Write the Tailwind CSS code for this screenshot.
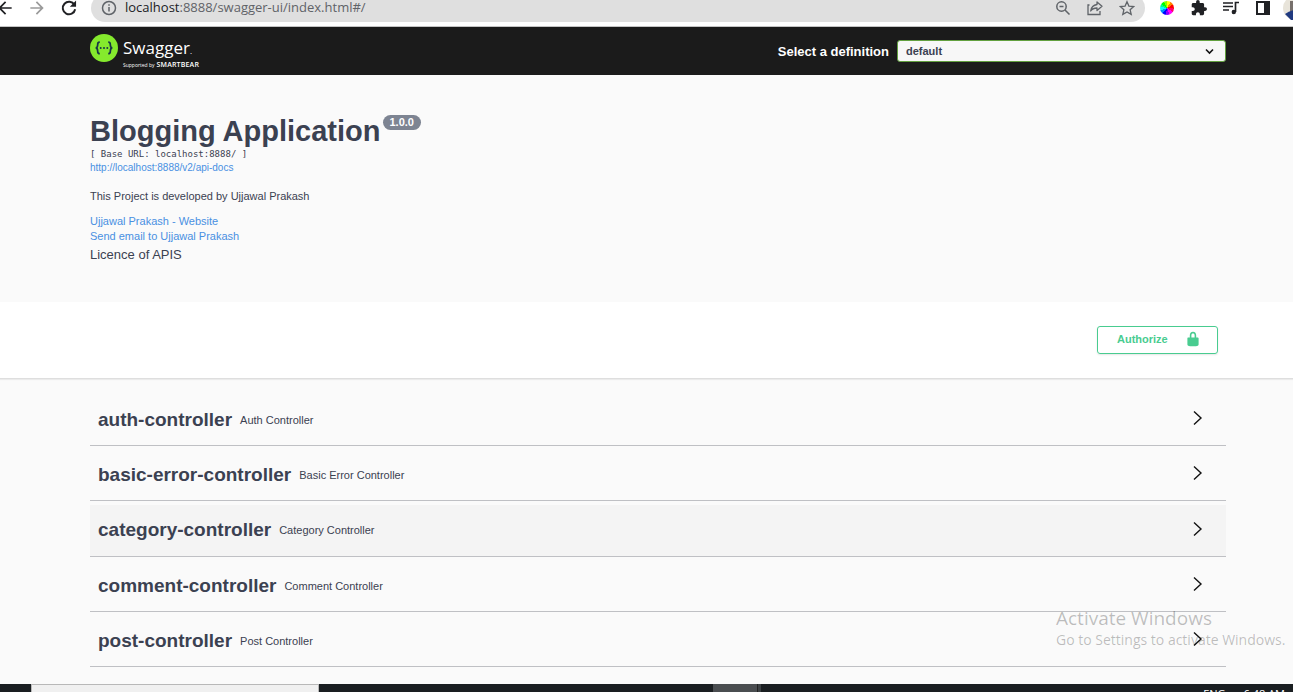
<!DOCTYPE html>
<html lang="en">
<head>
<meta charset="utf-8">
<title>Swagger UI</title>
<script src="https://cdn.jsdelivr.net/npm/@tailwindcss/browser@4"></script>
</head>
<body class="flex h-screen flex-col overflow-hidden bg-[#fafafa] font-['Liberation_Sans',Arial,sans-serif] text-[#3b4151]">

<div class="flex h-[27px] shrink-0 items-end overflow-hidden border-b border-[#c4c4c4] bg-white pb-1">
  <div class="flex h-7 w-[91px] shrink-0 items-center text-[#202124]">
    <button aria-label="Back" class="-ml-[5px] w-5"><svg class="size-5" viewBox="0 0 24 24" fill="currentColor"><path d="M20 11H7.83l5.59-5.59L12 4l-8 8 8 8 1.41-1.41L7.83 13H20z"/></svg></button>
    <button aria-label="Forward" class="ml-3 w-5 text-[#9a9a9a]"><svg class="size-5" viewBox="0 0 24 24" fill="currentColor"><path d="M4 11h12.17l-5.59-5.59L12 4l8 8-8 8-1.41-1.41L16.17 13H4z"/></svg></button>
    <button aria-label="Reload" class="ml-3 w-5"><svg class="size-5" viewBox="0 0 24 24" fill="none" stroke="currentColor" stroke-width="2.4"><path d="M18.500 8.200A7.500 7.500 0 1 0 19.400 13.500"/><path d="M20.500 3v7.500H13z" fill="currentColor" stroke="none"/></svg></button>
  </div>
  <div class="flex h-7 flex-1 items-center rounded-full bg-[#dfdfdf] pl-[10px] pr-[10px] text-[#5f6368]">
    <svg class="size-4" viewBox="0 0 16 16" fill="none" stroke="currentColor" stroke-width="1.500"><circle cx="8" cy="8" r="6.500"/><path d="M8 7v4.500M8 4.200v1.600"/></svg>
    <span class="ml-2 flex-1 whitespace-nowrap font-['Open_Sans',sans-serif] text-[13px]"><span class="text-[#202124]">localhost</span>:8888/swagger-ui/index.html#/</span>
    <div class="flex items-center gap-4">
      <button aria-label="Zoom"><svg class="block size-4" viewBox="0 0 16 16" fill="none" stroke="currentColor" stroke-width="1.500"><circle cx="6.500" cy="6.500" r="4.700"/><path d="M10 10l4.500 4.500M4.500 6.500h4"/></svg></button>
      <button aria-label="Share"><svg class="block size-4" viewBox="0 0 16 16" fill="none" stroke="currentColor" stroke-width="1.300"><path d="M2.500 5H1v9.500h12V11"/><path d="M10 2l5 4.300-5 4.200V8C7 8 5 9 3.700 11 4.200 7.500 6.500 5 10 4.500z" stroke-linejoin="round"/></svg></button>
      <button aria-label="Bookmark"><svg class="block size-4" viewBox="0 0 16 16" fill="none" stroke="currentColor" stroke-width="1.300"><path d="M8 1.700l1.900 4.400 4.800.4-3.600 3.200 1.100 4.700L8 11.900l-4.200 2.500 1.100-4.700L1.300 6.500l4.800-.4z"/></svg></button>
    </div>
  </div>
  <div class="flex h-7 w-[148px] shrink-0 items-center gap-4 overflow-hidden pl-[14px] text-[#202124]">
    <span class="mx-px size-[14px] shrink-0 rounded-full bg-[conic-gradient(#ff0_0_30deg,#ff8000_30deg_60deg,#f00_60deg_95deg,#f06_95deg_125deg,#f0f_125deg_160deg,#80f_160deg_190deg,#00f_190deg_220deg,#08f_220deg_250deg,#0ff_250deg_280deg,#0f8_280deg_305deg,#0f0_305deg_335deg,#8f0_335deg)]"></span>
    <svg class="size-4 shrink-0" viewBox="1 1 22 22" fill="currentColor"><path d="M20.500 11H19V7c0-1.100-.9-2-2-2h-4V3.500a2.500 2.500 0 0 0-5 0V5H4c-1.100 0-1.990.9-1.990 2v3.800H3.500c1.490 0 2.700 1.210 2.700 2.700s-1.210 2.700-2.700 2.700H2V20c0 1.100.9 2 2 2h3.800v-1.500c0-1.490 1.210-2.700 2.700-2.700s2.700 1.210 2.700 2.700V22H17c1.100 0 2-.9 2-2v-4h1.500a2.500 2.500 0 0 0 0-5z"/></svg>
    <svg class="size-4 shrink-0" viewBox="0 0 16 16" fill="none" stroke="currentColor" stroke-width="1.700"><path d="M0 3h10M0 6.500h10M0 10h6M12.500 12V2.500H16"/><circle cx="10.800" cy="12" r="2.200" fill="currentColor" stroke="none"/></svg>
    <svg class="size-4 shrink-0" viewBox="0 0 16 16"><path d="M1 1h14v14H1zM3 3v10h6V3z" fill="currentColor" fill-rule="evenodd"/></svg>
    <svg class="-ml-1 size-6 shrink-0" viewBox="0 0 24 24"><circle cx="12" cy="12" r="12" fill="#e8e4da"/><path d="M7 5h12v11H7z" fill="#77706c"/><path d="M2 18q6-5 14-4v10H8z" fill="#203a80"/></svg>
  </div>
</div>

<header class="flex h-12 shrink-0 items-center justify-between bg-[#1b1b1b] pl-[90px] pr-[67px]">
  <a href="#" aria-label="Swagger, supported by SmartBear" class="flex items-start pt-1 text-white">
    <svg class="-mt-1 size-7" viewBox="0 0 28 28" fill="none" stroke="#173647" stroke-width="1.700"><circle cx="14" cy="14" r="14" fill="#85ea2d" stroke="none"/><path d="M9.800 8.200C7.800 8.200 7.700 9 7.700 10.500 7.700 13 7.400 13.900 5.600 13.900 7.400 13.900 7.700 15 7.700 17.400 7.700 19 7.800 19.700 9.800 19.700M18.200 8.200C20.200 8.200 20.300 9 20.300 10.500 20.300 13 20.600 13.900 22.400 13.900 20.600 13.900 20.300 15 20.300 17.400 20.300 19 20.200 19.700 18.200 19.700"/><g fill="#173647" stroke="none"><circle cx="10.700" cy="14" r="1"/><circle cx="14" cy="14" r="1"/><circle cx="17.300" cy="14" r="1"/></g></svg>
    <span class="ml-[5px] flex flex-col font-['Open_Sans',sans-serif]">
      <span class="text-[17px] leading-5">Swagger<span class="text-[8px]">.</span></span>
      <span class="flex items-baseline gap-[2px] text-[5px] leading-2"><span>Supported by</span><b class="text-[7px] font-semibold tracking-wide">SMARTBEAR</b></span>
    </span>
  </a>
  <div class="flex items-center">
    <label for="definition" class="pt-px text-[13px] font-bold text-white">Select a definition</label>
    <div class="relative ml-2">
      <select id="definition" class="block h-[22px] w-[329px] appearance-none rounded-[3px] border border-[#62a03f] bg-[#f7f7f7] pl-2 text-[11px] font-bold text-[#3b4151]"><option>default</option></select>
      <svg class="pointer-events-none absolute right-3 top-[7px] size-[9px]" viewBox="0 0 9 9" fill="none" stroke="#111" stroke-width="1.600"><path d="M1 2.500l3.500 3.500L8 2.500"/></svg>
    </div>
  </div>
</header>

<section class="h-[227px] shrink-0 pl-[90px] pr-[67px] pt-[39px]">
  <div class="flex items-start">
    <h1 class="text-[29px] leading-[34px] font-bold">Blogging Application</h1>
    <span class="ml-[2px] mt-px rounded-full bg-[#7d8492] px-[7px] text-[11px] leading-[15px] font-bold text-white">1.0.0</span>
  </div>
  <pre class="font-['DejaVu_Sans_Mono',monospace] text-[9px] leading-3">[ Base URL: localhost:8888/ ]</pre>
  <a href="#" class="block text-[10px] leading-4 text-[#4990e2]">http://localhost:8888/v2/api-docs</a>
  <p class="mt-3 text-[11px] leading-4">This Project is developed by Ujjawal Prakash</p>
  <a href="#" class="mt-[10px] block text-[11px] leading-[15px] text-[#4990e2]">Ujjawal Prakash - Website</a>
  <a href="#" class="block text-[11px] leading-[15px] text-[#4990e2]">Send email to Ujjawal Prakash</a>
  <p class="mt-[2px] text-[13px] leading-[18px]">Licence of APIS</p>
</section>

<section class="flex h-[77px] shrink-0 items-center justify-end border-b border-[#dedede] bg-white pr-[75px] shadow-[0_1px_1px_rgba(0,0,0,0.06)]">
  <button class="flex h-7 w-[121px] items-center justify-between rounded-[3px] border border-[#49cc90] pl-[19px] pr-4 pb-[2px] text-[11px] font-bold text-[#49cc90] shadow-[0_1px_2px_rgba(0,0,0,0.1)]">Authorize
    <svg class="size-4" viewBox="0 0 20 20" fill="#49cc90"><path d="M15.800 8H14V5.600C14 2.703 12.665 1 10 1 7.334 1 6 2.703 6 5.600V8H4c-.553 0-1 .646-1 1.199V17c0 .549.428 1.139.951 1.307l1.197.387C5.672 18.861 6.550 19 7.100 19h5.800c.549 0 1.428-.139 1.951-.307l1.196-.387c.524-.167.953-.757.953-1.306V9.199C17 8.646 16.352 8 15.800 8zM12 8H8V5.199C8 3.754 8.797 3 10 3c1.203 0 2 .754 2 2.199V8z"/></svg>
  </button>
</section>

<main class="min-h-0 flex-1 pl-[90px] pr-[67px] pt-4 text-[11px]">
  <button class="flex h-[51px] w-full items-center border-b border-[#bfc0c4] pl-2 pr-5"><b class="text-[19px]">auth-controller</b><span class="ml-2 flex-1 text-left">Auth Controller</span><svg class="mb-1 size-4" viewBox="0 0 16 16" fill="none" stroke="#111" stroke-width="1.400"><path d="M4 1.500l7 6.500-7 6.500"/></svg></button>
  <button class="mt-1 flex h-[51px] w-full items-center border-b border-[#bfc0c4] pl-2 pr-5"><b class="text-[19px]">basic-error-controller</b><span class="ml-2 flex-1 text-left">Basic Error Controller</span><svg class="mb-1 size-4" viewBox="0 0 16 16" fill="none" stroke="#111" stroke-width="1.400"><path d="M4 1.500l7 6.500-7 6.500"/></svg></button>
  <button class="mt-1 flex h-[52px] w-full items-center border-b border-[#bfc0c4] bg-[#f4f4f4] pl-2 pr-5"><b class="text-[19px]">category-controller</b><span class="ml-2 flex-1 text-left">Category Controller</span><svg class="mb-1 size-4" viewBox="0 0 16 16" fill="none" stroke="#111" stroke-width="1.400"><path d="M4 1.500l7 6.500-7 6.500"/></svg></button>
  <button class="mt-1 flex h-[51px] w-full items-center border-b border-[#bfc0c4] pl-2 pr-5"><b class="text-[19px]">comment-controller</b><span class="ml-2 flex-1 text-left">Comment Controller</span><svg class="mb-1 size-4" viewBox="0 0 16 16" fill="none" stroke="#111" stroke-width="1.400"><path d="M4 1.500l7 6.500-7 6.500"/></svg></button>
  <button class="mt-1 flex h-[51px] w-full items-center border-b border-[#bfc0c4] pl-2 pr-5"><b class="text-[19px]">post-controller</b><span class="ml-2 flex-1 text-left">Post Controller</span><svg class="mb-1 size-4" viewBox="0 0 16 16" fill="none" stroke="#111" stroke-width="1.400"><path d="M4 1.500l7 6.500-7 6.500"/></svg></button>
</main>

<footer class="flex h-2 shrink-0 overflow-hidden bg-[#1a1e21] text-white">
  <div class="ml-[31px] w-72 border border-b-0 border-[#b8b8b8] bg-[#f0f0f0]"></div>
  <div class="ml-[394px] w-11 bg-[#4a4d50]"></div>
  <div class="w-1 border-l border-[#222] bg-[#3c4043]"></div>
  <div class="ml-auto flex gap-[18px] pr-2 pt-[2px] font-['Open_Sans',sans-serif] text-[11px] leading-4"><span>ENG</span><span>6:48 AM</span></div>
</footer>

<div class="pointer-events-none absolute right-0 bottom-[42px] w-[237px] font-['Open_Sans',sans-serif] whitespace-nowrap text-black/25">
  <div class="text-[19px] leading-6">Activate Windows</div>
  <div class="text-[14px] leading-5">Go to Settings to activate Windows.</div>
</div>
</body>
</html>
